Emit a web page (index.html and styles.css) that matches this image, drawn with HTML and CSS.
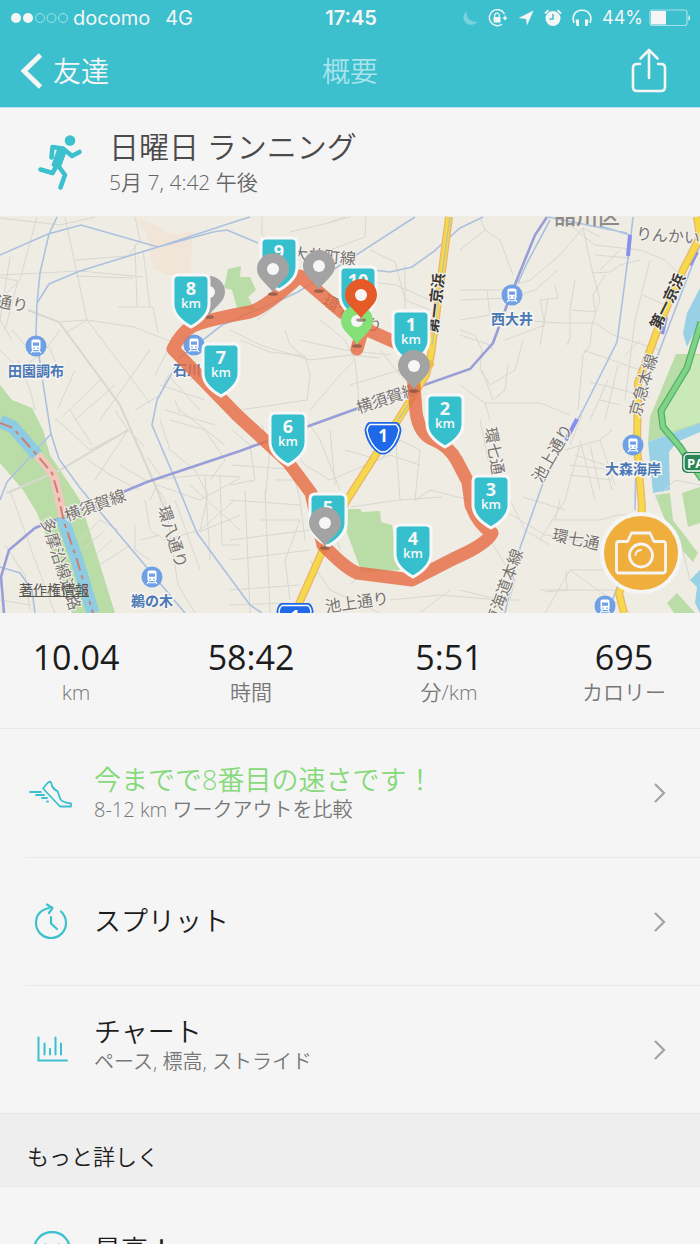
FILE: index.html
```html
<!DOCTYPE html>
<html lang="ja">
<head>
<meta charset="utf-8">
<meta name="viewport" content="width=device-width, initial-scale=1">
<title>概要</title>
<link rel="stylesheet" href="styles.css">
</head>
<body>
<div class="app">
  <header class="top">
    <div class="status">
      <div class="status-left">
        <svg class="signal" viewBox="0 0 58 12" width="58" height="12"><g fill="#f5f5f5"><circle cx="5" cy="6" r="5"/><circle cx="17" cy="6" r="5"/></g><g fill="none" stroke="#a5e0e8"><circle cx="29" cy="6" r="4.5"/><circle cx="40.500" cy="6" r="4.500"/><circle cx="52" cy="6" r="4.500"/></g></svg>
        <span>docomo</span><span class="network">4G</span>
      </div>
      <div class="clock">17:45</div>
      <div class="status-right">
        <svg viewBox="0 0 16 18" width="16" height="18"><path d="M5 2A7.500 7.500 0 1 0 15.500 12A8 8 0 0 1 5 2Z" fill="#79d3dd"/></svg>
        <svg viewBox="0 0 20 18" width="20" height="18"><path d="M16.500 5A8 8 0 1 0 14 15.200M17 6.500V9" fill="none" stroke="#f5f5f5" stroke-width="1.400"/><path d="M14.300 8.500h5.400L17 11.500ZM5.500 8h7v5.500h-7Z" fill="#f5f5f5"/><path d="M6.700 8V6.500a2.300 2.300 0 0 1 4.600 0V8" fill="none" stroke="#f5f5f5" stroke-width="1.200"/></svg>
        <svg viewBox="0 0 16 18" width="16" height="18"><path d="M15.500 1.500 9 16.500 8 10 .5 9Z" fill="#f5f5f5"/></svg>
        <svg viewBox="0 0 18 18" width="18" height="18"><circle cx="9" cy="9.500" r="7.500" fill="#f5f5f5"/><path d="M1 4.500 4.500 1.200M13.500 1.200 17 4.500" stroke="#f5f5f5" stroke-width="1.800"/><path d="M9 5v5H5.500" fill="none" stroke="#3cc0ce" stroke-width="1.500"/></svg>
        <svg viewBox="0 0 20 18" width="20" height="18"><path d="M2 14C-.5 7 3 1.200 10 1.200S20.500 7 18 14" fill="none" stroke="#f5f5f5" stroke-width="1.600"/><path d="M3.500 10.500H7V17H4.500ZM13 10.500h3.500L15.500 17H13Z" fill="#f5f5f5"/></svg>
        <span class="percent">44%</span>
        <svg viewBox="0 0 42 18" width="42" height="18"><rect x="1" y="1" width="37" height="15.500" rx="2.500" fill="none" stroke="#a5e0e8" stroke-width="1.200"/><path d="M2 2h15v13.500H2Z" fill="#f5f5f5"/><path d="M39.500 6q3 3 0 6Z" fill="#f5f5f5"/></svg>
      </div>
    </div>
    <nav class="nav">
      <button class="back" type="button"><svg viewBox="0 0 22 36" width="22" height="36"><path d="M19.500 2 3 18l16.500 16" fill="none" stroke="#f5f5f5" stroke-width="5"/></svg><span>友達</span></button>
      <h1 class="nav-title">概要</h1>
      <button class="share" type="button" aria-label="共有"><svg viewBox="0 0 36 46" width="36" height="46"><path d="M9 16H6q-4 0-4 4v19q0 4 4 4h24q4 0 4-4V20q0-4-4-4h-3M18 30V2M9.500 10.500 18 2l8.500 8.500" fill="none" stroke="#f5f5f5" stroke-width="2.600" stroke-linecap="round" stroke-linejoin="round"/></svg></button>
    </nav>
  </header>

  <main>
    <section class="activity">
      <svg viewBox="0 0 46 58" width="46" height="58"><circle cx="33" cy="6.500" r="5.300" fill="#3cc0ce"/><path d="M22 14 28 18 22 34 16 31ZM14 30" fill="#3cc0ce" stroke="#3cc0ce" stroke-width="3" stroke-linejoin="round"/><path d="M14.500 23.500 15.500 13 26 14.500 35 22 42.500 18M20 31 15.500 39 3.500 35.500M21 31.500 28 41 23.500 53.500M26 17l-6 14" fill="none" stroke="#3cc0ce" stroke-width="4.600" stroke-linecap="round" stroke-linejoin="round"/></svg>
      <div>
        <h2 class="activity-name">日曜日 ランニング</h2>
        <p class="activity-date">5月 7, 4:42 午後</p>
      </div>
    </section>

    <section class="map">
      <svg class="map-canvas" viewBox="0 216 700 397" role="img" aria-label="ランニングコースの地図">
        <defs>
          <path id="shield" d="M-18 5q0-5 5-5h26q5 0 5 5v24q0 13-18 23q-18-10-18-23Z" fill="#36c0ce" stroke="#f7f7f7" stroke-width="3"/>
          <g id="pin"><ellipse cx="0" cy="25" rx="5" ry="1.800" fill="#6b4a40" opacity=".6"/><path d="M0 23.500C-5 15-16 10-16 0a16 16 0 0 1 32 0C16 10 5 15 0 23.500Z"/><circle r="6" fill="#f6f6f6"/></g>
          <g id="station"><circle r="10.500" fill="#6fa0e6"/><rect x="-4.500" y="-6.500" width="9" height="10.500" rx="1.800" fill="#fff"/><path d="M-3-3.500h6v3.300h-6ZM-2.800 1.500h1.600v1.300h-1.600ZM1.200 1.500h1.600v1.300H1.200Z" fill="#6fa0e6"/><path d="M-3 4-5 7M3 4 5 7M-3.500 5.700h7" stroke="#fff" stroke-width="1.100"/></g>
          <g id="route-sign"><path d="M-14-16H14Q17.500-14 18.500-8C17 4 10 12 5 15Q0 18-5 15C-10 12-17 4-18.500-8Q-17.500-14-14-16Z" fill="#1f68e8"/><path d="M-13-13.500H13Q15.500-11.500 16-8C14.500 3 8 10.500 4 13Q0 15-4 13C-8 10.500-14.500 3-16-8Q-15.500-11.500-13-13.500Z" fill="none" stroke="#fff" stroke-width="1.400"/><text class="sign" y="4">1</text></g>
        </defs>
        <path fill="#efece4" d="M0 216h700v397H0Z"/>
        <path fill="#f1e5d7" d="M132 216 155 225 173 235 193 231 190 273 167 275 153 268 147 233Z"/>
        <g fill="#badda8">
          <path d="M0 385 12 400 32 408 43 430 50 455 80 500 115 613H72L60 570 37 513 23 490 0 463Z"/>
          <path d="M228 269 241 266 240 277 250 277 256 290 248 297 255 310 237 308 232 290 224 288Z"/>
          <path d="M348 509h12l2 3 18-1 1 11 11 3 8 45-38 3-15-40Z"/>
          <path d="M676 354h24v69l-52 19 2-25Z"/><path d="M655 495 670 493 673 520 698 553 693 562 673 540ZM682 493 700 487V523L688 527ZM667 603 677 593 695 613H674Z"/>
        </g>
        <path fill="#c9e9b9" d="M690 355h10v67l-30 10-7-15Z"/>
        <path fill="#98d0e6" d="M700 288 687 313 683 333 687 347 700 320ZM648 442 700 423V432L677 442 669 452 670 490 653 493ZM700 570 690 580 697 587 695 603 700 613Z"/>
        <g fill="none" stroke="#d8d7d1" stroke-width="1">
          <path stroke-width="2" d="M28 310 59 322 120 405 155 485 165 510M7 493 60 470 128 430"/>
          <path d="M0 218 60 225 95 217M37 217 20 280 0 300M65 217 87 320 150 403M0 275 60 272 80 271 143 277M75 260 128 256 140 240 135 217M76 276 133 278M118 307H153L158 333M135 244 137 307M143 250 150 307M59 322 87 320 134 327 172 342M67 332 87 320M172 342 155 375M10 257 0 320 12 340M0 277 18 281 5 330M0 350 20 370 45 350 60 330M12 330 25 345 50 348 62 380M18 360 30 390 35 410M58 408 75 370M62 417 100 380M75 420 115 385M100 420 150 350M135 410 160 395 168 375 200 410M160 385 205 400M175 400 180 413M190 380 215 365 235 370"/>
          <path d="M55 418 90 450 128 430 115 410M70 410 92 445M95 480 128 430 145 447M88 460 110 475 140 490M120 465 150 483M147 457 160 475M150 480 200 475 240 477M150 500 157 485 200 500 240 478M145 500 150 530 165 540 200 530 235 500M140 540 160 535M80 540 100 520 118 530M85 548 105 530M95 555 112 540M100 565 130 545M135 525 135 550 150 560M155 485 165 500 178 585 195 613M160 420 170 450 195 470 208 495 200 530M170 420 205 430 225 460 210 480M165 410 215 425M180 410 225 445M190 485 240 530M175 500 200 570M205 475 210 560M220 475 222 545 240 545M197 533 240 515M10 490 35 560 55 613M5 545 25 575 30 610M0 600 30 605"/>
          <path d="M262 217v18l25 18M290 232 320 225 350 217M366 217 365 237 330 250M270 270 300 260M345 217 330 222M370 250 395 262 405 300 430 310M360 280 395 285 430 300M405 265V310M230 330 260 345 310 360 350 355 380 358M240 340 270 352 305 356 310 375 307 400 240 410M285 330 290 345 307 360M300 340 345 350 390 355M320 320 345 340 355 360 340 375 310 410M355 360 360 410M380 350 400 375 410 370M350 385 400 370M257 320 285 298"/>
          <path d="M232 430 250 445 255 480 230 485M250 445 285 440 305 465 330 480 390 455 420 465M262 425 270 450 265 500M232 465 300 470M230 500 300 505M245 490 250 613M265 490 270 613M230 540 310 530M230 560 310 550M230 590 300 585M285 440 300 500 305 540M300 410 320 440 340 490M330 430 335 485M345 450 380 460 400 440 420 450 415 500M330 520 340 550M350 507 400 500 442 497M395 430 400 500M415 500 430 490 470 500M300 520 285 560 290 600M310 560 330 590 380 613M390 600 440 595 500 600M420 613 450 590M230 605 290 603M275 480 300 480M260 520H300M365 570 350 585"/>
          <path d="M460 250 485 230 480 217M485 230 500 240 513 275M460 290 500 290 530 280 560 255 583 228 600 237M460 300 510 298 535 290 558 270M570 225 595 245 640 250M583 228 592 270 600 300M592 273 610 272 620 265 640 260M460 320 490 315 487 290M460 335 490 345 493 350M505 340 545 325 540 300 558 298 555 285M548 298 540 345M515 320 560 323H595L613 335 660 350M575 280 570 310 570 338 567 345M572 310 595 312 593 295 605 275M600 300 592 325 590 345 583 355 578 410M583 350 640 370M590 382 650 397M460 330 475 335 482 350 480 370 490 385 515 370 523 340M482 370 493 400 505 390 508 365M460 385 485 403 540 403 570 415M485 403 490 420M600 400 620 405M640 250 665 260 685 280M650 260 635 320 625 400M643 295 665 305M608 380 590 420M618 365 605 420M640 340 625 355M595 255 630 258M600 270 620 250"/>
          <path d="M580 445 565 500 540 540M575 455 605 465 612 490M565 450 600 440 612 430M570 465 615 470M570 475 612 480M580 440 595 500M590 445 600 490M600 440 615 485M560 500 555 520 600 520 618 515 637 515M523 497 565 510M503 510 545 535 600 545M490 540 515 580 510 600M510 500 525 530 550 545M545 613 570 570H620M566 571 567 590 545 592M570 570 630 613M460 590 500 600 520 600M470 500 490 520M540 590 620 590M655 500 675 480 700 485M680 540 690 580M655 560 680 555M480 420 488 460 500 470M582 415 570 445"/>
        </g>
        <g fill="none" stroke="#abc1df" stroke-width="1.600">
          <path d="M0 255 48 234 81 225 158 247 240 220 250 217M57 217 49 234 40 273 37 303 36 335 42 377 51 434 59 459 80 488 185 613M37 303 49 284 80 271 158 247 213 232 227 230 258 243M240 317 285 298 298 292 353 257 415 217M373 270 390 272 412 267 433 252 460 228 483 217M240 318 222 325 203 340 180 357 172 373 157 400 152 425 172 472 197 533 250 605 262 613M51 434 7 482 0 500M0 567 20 573 32 590 35 613M548 217 627 233M600 226 630 235M633 217 631 235 617 342 583 410 543 483 520 548 505 613M550 220 527 263 518 283M700 245 675 310 637 410 635 510M618 585 608 613"/>
        </g>
        <g fill="none" stroke="#999ed8" stroke-width="2.600"><path d="M4 613 1 577 9 550 35 528 63 517 123 492 147 482 240 451 353 410 470 369 493 343 510 297 518 277 535 235 547 217"/></g>
        <path fill="none" stroke="#8690ef" stroke-width="4" d="M630 235 628 256M577 419 566 440M697 252 690 265M666 317 662 334"/>
        <path fill="none" stroke="#8dcce3" stroke-width="13" d="M0 421 13 427 37 455M62 517 77 560 93 613"/>
        <path fill="none" stroke="#f2c8bd" stroke-width="9" d="M37 455Q53 472 55 480L63 517"/>
        <path fill="none" stroke="#cc7f74" stroke-width="2" stroke-dasharray="13 5 4 5" d="M0 423 13 428 37 455 52 473 57 490 64 522 77 560 93 613"/>
        <g fill="none">
          <path stroke="#eeb26a" stroke-width="8" d="M449 217 431 355 426 375 398 420 347 500 322 552 295 613M697 217 700 237 683 270 660 323 638 383 637 447 642 507 638 550 619 593 624 613"/>
          <path stroke="#f4d94a" stroke-width="5.500" d="M449 217 431 355 426 375 398 420 347 500 322 552 295 613M697 217 700 237 683 270 660 323 638 383 637 447 642 507 638 550 619 593 624 613"/>
          <path stroke="#c4c59a" stroke-width="1.500" d="M450 217 432 345M418 390 398 420"/>
          <path stroke="#56ad66" stroke-width="7" d="M701 322 687 368 661 411 663 427 680 447 702 479"/><path stroke="#7ed588" stroke-width="4.500" d="M701 322 687 368 661 411 663 427 680 447 702 479"/>
        </g>
        <circle cx="430" cy="364" r="4" fill="#edbd4d"/>
        <g class="road">
          <text x="324" y="262" transform="rotate(5 325 257)">大井町線</text><text x="352" y="320" transform="rotate(28 352 315)">環七通り</text>
          <text x="387" y="404" transform="rotate(-18 387 398)">横須賀線</text><text x="95" y="511" transform="rotate(-20 95 505)">横須賀線</text>
          <text x="12" y="309" transform="rotate(10 12 304)" dx="-16">環八通り</text>
          <text x="172" y="542" transform="rotate(73 172 537)">環八通り</text><text x="60" y="569" transform="rotate(72 60 564)">多摩沿線道路</text>
          <text x="357" y="608" transform="rotate(-8 357 603)">池上通り</text><text x="552" y="459" transform="rotate(-60 552 453)">池上通り</text>
          <text x="495" y="464" transform="rotate(80 495 459)">環七通り</text><text x="576" y="545" transform="rotate(12 576 539)">環七通</text>
          <text x="504" y="593" transform="rotate(-70 504 587)">東海道本線</text><text x="643" y="391" transform="rotate(-74 643 385)">京急本線</text>
          <text x="676" y="242" transform="rotate(4 674 236)">りんかい線</text>
        </g>
        <g class="road highway"><text x="435" y="309" transform="rotate(-83 435 303)">第一京浜</text><text x="667" y="307" transform="rotate(-64 667 301)">第一京浜</text></g>
        <text class="ward" x="587" y="224">品川区</text>
        <use href="#station" x="36" y="346"/><use href="#station" x="194" y="345"/><use href="#station" x="512" y="295"/><use href="#station" x="152" y="577"/><use href="#station" x="633" y="445"/><use href="#station" x="605" y="606"/>
        <g class="place"><text x="36" y="376">田園調布</text><text x="194" y="375">石川台</text><text x="512" y="324">西大井</text><text x="152" y="606">鵜の木</text><text x="633" y="474">大森海岸</text></g>
        <use href="#route-sign" x="383" y="438"/><use href="#route-sign" x="295" y="619"/>
        <g><rect x="682" y="452" width="40" height="21" rx="5" fill="#2c8553"/><rect x="684" y="454" width="40" height="17" rx="4" fill="none" stroke="#fff" stroke-width="1.300"/><text class="parking" x="687" y="468">PA</text></g>
        <path fill="none" stroke="#e66b42" stroke-opacity=".81" stroke-width="13" stroke-linecap="round" stroke-linejoin="round" d="M357 349 363 328 397 343 411 356 414 385 416 412Q419 434 434 440T457 461L468 482 471 505Q478 524 492 533Q487 544 455 558L412 580 357 573Q345 568 323 545L311 493 288 462 237 415 173 349Q181 332 193 326T250 312Q265 308 300 276L343 313 367 327"/>
        <g class="marker">
          <use href="#pin" x="209" y="292" fill="#a3a3a3"/>
          <g transform="translate(191 275)"><use href="#shield"/><text y="20">8</text><text class="unit" y="33">km</text></g>
          <g transform="translate(221 344)"><use href="#shield"/><text y="20">7</text><text class="unit" y="33">km</text></g>
          <g transform="translate(279 238)"><use href="#shield"/><text y="20">9</text></g>
          <g transform="translate(358 267)"><use href="#shield"/><text y="20">10</text></g>
          <g transform="translate(411 311)"><use href="#shield"/><text y="20">1</text><text class="unit" y="33">km</text></g>
          <g transform="translate(445 395)"><use href="#shield"/><text y="20">2</text><text class="unit" y="33">km</text></g>
          <g transform="translate(288 413)"><use href="#shield"/><text y="20">6</text><text class="unit" y="33">km</text></g>
          <g transform="translate(328 494)"><use href="#shield"/><text y="20">5</text></g>
          <g transform="translate(413 525)"><use href="#shield"/><text y="20">4</text><text class="unit" y="33">km</text></g>
          <g transform="translate(491 476)"><use href="#shield"/><text y="20">3</text><text class="unit" y="33">km</text></g>
          <use href="#pin" x="273" y="269" fill="#a3a3a3"/><use href="#pin" x="319" y="266" fill="#a3a3a3"/><use href="#pin" x="414" y="366" fill="#a3a3a3"/><use href="#pin" x="325" y="523" fill="#a3a3a3"/>
          <use href="#pin" x="357" y="321" fill="#85e077"/><use href="#pin" x="361" y="295" fill="#e65a27"/>
        </g>
      </svg>
      <a class="legal" href="#legal">著作権情報</a>
      <button class="camera" type="button" aria-label="写真を追加"><svg viewBox="0 0 52 46" width="52" height="46"><g fill="none" stroke="#f5f5f5" stroke-width="2.800" stroke-linejoin="round"><path d="M4 11.500H12.500L16.500 3H35L39 11.500H48Q50.500 11.500 50.500 14V40Q50.500 43 48 43H4Q1.500 43 1.500 40V14Q1.500 11.500 4 11.500Z"/><circle cx="26" cy="25.500" r="11.500"/><path d="M20.500 25Q21 20.500 26 20" stroke-width="1.800" stroke-linecap="round"/></g></svg></button>
    </section>

    <dl class="stats">
      <div class="stat"><dd>10.04</dd><dt>km</dt></div>
      <div class="stat"><dd>58:42</dd><dt>時間</dt></div>
      <div class="stat"><dd>5:51</dd><dt>分/km</dt></div>
      <div class="stat"><dd>695</dd><dt>カロリー</dt></div>
    </dl>

    <div class="rows">
      <a class="row" href="#compare">
        <svg viewBox="0 0 44 32" width="44" height="32"><g fill="none" stroke="#3cc0ce" stroke-width="1.800" stroke-linejoin="round" stroke-linecap="round"><path d="M14 11.500 18.500 6 21 4.500Q22.500 5 23 9Q25 13 28.500 14L31.500 22.500Q34 25.500 42 26.500V29.500H31Z"/><path d="M1 15H12M7 18H15M13 21H18M18 24.500h1"/></g></svg>
        <span class="row-text"><strong class="good">今までで8番目の速さです！</strong><small>8-12 km ワークアウトを比較</small></span>
        <svg class="chevron" viewBox="0 0 14 24" width="14" height="24"><path d="M2 3 11 12 2 21"/></svg>
      </a>
      <a class="row" href="#splits">
        <svg viewBox="0 0 44 40" width="44" height="40"><g fill="none" stroke="#3cc0ce" stroke-width="2.200" stroke-linecap="round" stroke-linejoin="round"><path d="M20 6Q7 9 7 21a15 15 0 0 0 30 0Q37 14 32 9.500M18 2.500 23.500 6 20 11M22 15V21.500L28 27"/></g></svg>
        <span class="row-text"><strong>スプリット</strong></span>
        <svg class="chevron" viewBox="0 0 14 24" width="14" height="24"><path d="M2 3 11 12 2 21"/></svg>
      </a>
      <a class="row" href="#charts">
        <svg viewBox="0 0 44 32" width="44" height="32"><path d="M9.500 3.500V26.500H38M15.500 9.500V20.500M21 15V20.500M26.500 3.500V20.500M32 9.500V20.500" fill="none" stroke="#3cc0ce" stroke-width="2" stroke-linecap="round"/></svg>
        <span class="row-text raised"><strong>チャート</strong><small>ペース, 標高, ストライド</small></span>
        <svg class="chevron" viewBox="0 0 14 24" width="14" height="24"><path d="M2 3 11 12 2 21"/></svg>
      </a>
    </div>
    <h2 class="section-title">もっと詳しく</h2>
    <div class="rows">
      <div class="row">
        <svg viewBox="0 0 44 40" width="44" height="40"><circle cx="23" cy="19" r="18" fill="none" stroke="#3cc0ce" stroke-width="2.400"/><circle cx="16.500" cy="15" r="2.500" fill="#3cc0ce"/><circle cx="30" cy="15" r="2.500" fill="#3cc0ce"/><path d="M13 23q10 12 20 0" fill="none" stroke="#3cc0ce" stroke-width="2.200"/></svg>
        <span class="row-text"><strong>最高！</strong></span>
      </div>
    </div>
  </main>
</div>
</body>
</html>
```
FILE: styles.css
```css
* { box-sizing: border-box; }

body {
  margin: 0;
  background: #f5f5f5;
  color: #1c1c1c;
  font-family: "Open Sans", "Noto Sans CJK JP", sans-serif;
  font-weight: 350;
}

h1, h2, p, dl, dd { margin: 0; font-weight: inherit; }
button { border: 0; padding: 0; background: none; color: inherit; font: inherit; }
a { color: inherit; text-decoration: none; }
svg { display: block; flex: none; }

.app { display: flex; flex-direction: column; height: 100vh; overflow: hidden; }
main { flex: 1; min-height: 0; overflow: hidden; }

.top { flex: none; background: #3cc0ce; color: #f5f5f5; border-bottom: 1px solid #b5e5eb; }

.status {
  display: grid;
  grid-template-columns: 1fr auto 1fr;
  align-items: center;
  height: 36px;
  padding: 0 9px 0 11px;
  font: 400 20px/24px Inter, sans-serif;
}
.status-left, .status-right { display: flex; align-items: center; }
.status-left { gap: 4px; }
.network { margin-left: 11px; }
.clock { font-weight: 600; }
.percent { font-size: 18px; }
.status-right { justify-content: flex-end; gap: 10px; }
.status-right svg:last-child { margin-left: -4px; }

.nav {
  display: grid;
  grid-template-columns: 1fr auto 1fr;
  align-items: center;
  height: 71px;
  padding: 0 33px 2px 21px;
  font-size: 28px;
  line-height: 40px;
}
.back { display: flex; align-items: center; gap: 10px; justify-self: start; }
.nav-title { padding-left: 12px; font-size: 28px; color: #a9e3ea; }
.share { justify-self: end; }

.activity { display: flex; align-items: center; gap: 26px; height: 108px; padding: 2px 37px 0; color: #4a4a4a; }
.activity-name { font-size: 30px; line-height: 38px; }
.activity-date { font-size: 21px; line-height: 32px; color: #666; }

.map { position: relative; overflow: hidden; }
.map-canvas { width: 100%; height: auto; }
.map text { text-anchor: middle; font-family: "Open Sans", "Noto Sans CJK JP", sans-serif; paint-order: stroke; }
.road text { font-size: 16px; font-weight: 400; fill: #77736f; stroke: #f4f2ed; stroke-width: 2px; }
.highway text { font-size: 15px; font-weight: 700; fill: #3a3835; }
.map .ward { font-size: 22px; font-weight: 500; fill: #8d8b88; }
.place text { font-size: 14px; font-weight: 700; fill: #4a78b5; stroke: #f6f5f1; stroke-width: 3px; }
.map .sign { font-size: 17px; font-weight: 700; fill: #fff; }
.map .parking { font-size: 13px; font-weight: 700; fill: #fff; text-anchor: start; }
.marker text { font-size: 18px; font-weight: 700; fill: #f7f7f7; }
.marker .unit { font-size: 13px; font-weight: 600; }

.legal { position: absolute; left: 19px; bottom: 13px; font-size: 14px; line-height: 20px; font-weight: 400; color: #55554f; text-decoration: underline; }
.camera {
  position: absolute;
  right: 18px;
  bottom: 19px;
  display: grid;
  place-items: center;
  width: 82px;
  height: 82px;
  border: 4px solid #f5f5f5;
  border-radius: 50%;
  background: #f0ae3d;
}

.stats { display: grid; grid-template-columns: 152fr 198fr 198fr 152fr; padding: 23px 0 22px; border-bottom: 1px solid #e9e9e9; }
.stat { display: flex; flex-direction: column; align-items: center; }
.stat dd { font-size: 34px; line-height: 42px; font-weight: 500; }
.stat dt { font-size: 21px; line-height: 28px; color: #777; }

.rows { padding-left: 25px; }
.row { display: flex; align-items: center; min-height: 128px; padding: 0 33px 0 4px; }
.row + .row { border-top: 1px solid #e9e9e9; }
.row-text { display: flex; flex: 1; flex-direction: column; margin-left: 21px; padding-bottom: 2px; }
.row-text.raised { padding-bottom: 12px; }
.row-text strong { font-size: 27px; line-height: 36px; font-weight: 350; }
.row-text small { font-size: 20px; line-height: 24px; color: #777; }
.row-text .good { color: #86d97a; }
.chevron path { fill: none; stroke: #a3a3a3; stroke-width: 2.2px; }

.section-title {
  padding: 26px 27px 14px;
  border: 1px solid #e6e6e6;
  border-width: 1px 0;
  background: #eee;
  font-size: 22px;
  line-height: 32px;
}
```
